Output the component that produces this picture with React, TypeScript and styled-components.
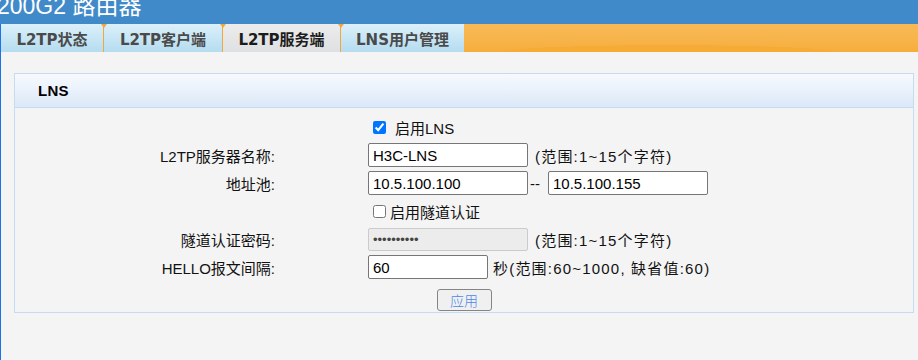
import React, { FC } from 'react';
import styled, { createGlobalStyle } from 'styled-components';

const GlobalStyle = createGlobalStyle`
  html, body {
    margin: 0;
    padding: 0;
    background: #f4f4f4;
    overflow: hidden;
  }
  body {
    font-family: 'Liberation Sans', 'Noto Sans CJK SC', Arial, sans-serif;
  }
`;

const Page = styled.div`
  width: 918px;
  height: 360px;
  display: flex;
  flex-direction: column;
  overflow: hidden;
`;

const TitleBar = styled.div`
  height: 24px;
  flex: none;
  background: #418ac9;
  overflow: hidden;
`;

const Title = styled.div`
  margin: -6px 0 0 -3px;
  font-size: 23px;
  line-height: 24px;
  color: #ffffff;
  white-space: nowrap;
`;

const Main = styled.div`
  flex: 1;
  display: flex;
  flex-direction: column;
  border-left: 1px solid #1a73e8;
  background: #f4f4f4;
`;

const TabBar = styled.div`
  height: 28px;
  display: flex;
  flex: none;
`;

const Tab = styled.div<{ $w: number; $active?: boolean; $sep?: boolean }>`
  position: relative;
  box-sizing: border-box;
  width: ${(p) => p.$w}px;
  height: 28px;
  display: flex;
  align-items: center;
  justify-content: center;
  font-family: 'DejaVu Sans', 'Noto Sans CJK SC', sans-serif;
  font-weight: bold;
  font-size: 15px;
  color: ${(p) => (p.$active ? '#1c1c1c' : '#4a4a4a')};
  background: ${(p) =>
    p.$active
      ? 'linear-gradient(#ececec, #dfe0e2)'
      : 'linear-gradient(#dbf0fa, #b5dcf0)'};
  border-right: ${(p) => (p.$sep ? '1px solid #f2a73c' : 'none')};

  &::after {
    content: '';
    display: ${(p) => (p.$sep ? 'block' : 'none')};
    position: absolute;
    top: 0;
    right: -4px;
    border-left: 3px solid transparent;
    border-right: 3px solid transparent;
    border-top: 4px solid #f2a73c;
    z-index: 1;
  }
`;

const TabFill = styled.div`
  flex: 1;
  height: 28px;
  background:
    radial-gradient(ellipse 60% 40% at 45% 100%, #f6ab36 60%, transparent 62%),
    linear-gradient(#f8b955, #f7b44b 55%, #f6ad3a);
`;

const Content = styled.div`
  padding: 21px 4px 0 13px;
`;

const Panel = styled.div`
  width: 900px;
  box-sizing: border-box;
  border: 1px solid #c6dbef;
`;

const PanelHeader = styled.div`
  height: 33px;
  display: flex;
  align-items: center;
  padding-left: 23px;
  border-bottom: 1px solid #c6dbef;
  background: linear-gradient(#f7fafe, #dbe8f8);
  font-weight: bold;
  font-size: 15px;
  letter-spacing: 0.3px;
  color: #000;
`;

const PanelBody = styled.div`
  padding: 5px 0 1px;
  display: flex;
  flex-direction: column;
`;

const Row = styled.div`
  display: grid;
  grid-template-columns: 262px 1fr;
  column-gap: 91px;
  height: 28px;
  align-items: center;
  font-size: 15px;
  color: #111;
`;

const Label = styled.div`
  text-align: right;
  padding-right: 2px;
  white-space: nowrap;
`;

const Cell = styled.div`
  display: flex;
  align-items: center;
  white-space: nowrap;
`;

const Check = styled.input<{ $gap: number }>`
  width: 13px;
  height: 13px;
  margin: 0 ${(p) => p.$gap}px 0 5px;
`;

const Field = styled.input<{ $w: number }>`
  box-sizing: border-box;
  width: ${(p) => p.$w}px;
  height: 24px;
  margin: 0;
  padding: 0 4px;
  border: 1px solid #767676;
  border-radius: 2px;
  background: #fff;
  font-family: 'Liberation Sans', 'Noto Sans CJK SC', sans-serif;
  font-size: 15px;
  color: #000;
  outline: none;

  &:disabled {
    height: 23px;
    background: #ececec;
    border-color: #cbcbcb;
    color: #444;
    font-size: 13px;
    letter-spacing: 0;
  }
`;

const Hint = styled.span<{ $gap: number }>`
  margin-left: ${(p) => p.$gap}px;
  font-size: 15px;
  letter-spacing: 1.2px;
`;

const Dash = styled.span`
  margin: 0 8px 0 2px;
  font-size: 15px;
`;

const ButtonRow = styled.div`
  display: flex;
  justify-content: center;
  padding-top: 8px;
`;

const ApplyButton = styled.button`
  width: 55px;
  height: 22px;
  padding: 0;
  border: 1px solid #858585;
  border-radius: 3px;
  background: #f0f0f0;
  font-family: 'Noto Sans CJK SC', sans-serif;
  font-size: 14px;
  font-weight: 300;
  color: #4f86ea;
`;

const tabs = [
  { name: 'L2TP状态', w: 103, sep: true },
  { name: 'L2TP客户端', w: 119, sep: true },
  { name: 'L2TP服务端', w: 118, sep: true, active: true },
  { name: 'LNS用户管理', w: 123 },
];

const App: FC = () => {
  return (
    <Page>
      <GlobalStyle />
      <TitleBar>
        <Title>200G2 路由器</Title>
      </TitleBar>
      <Main>
        <TabBar>
          {tabs.map((t) => (
            <Tab key={t.name} $w={t.w} $sep={t.sep} $active={t.active}>
              {t.name}
            </Tab>
          ))}
          <TabFill />
        </TabBar>
        <Content>
          <Panel>
            <PanelHeader>LNS</PanelHeader>
            <PanelBody>
              <Row>
                <Label />
                <Cell>
                  <Check type="checkbox" defaultChecked $gap={9} />
                  <span>启用LNS</span>
                </Cell>
              </Row>
              <Row>
                <Label>L2TP服务器名称:</Label>
                <Cell>
                  <Field $w={160} defaultValue="H3C-LNS" />
                  <Hint $gap={7}>(范围:1~15个字符)</Hint>
                </Cell>
              </Row>
              <Row>
                <Label>地址池:</Label>
                <Cell>
                  <Field $w={160} defaultValue="10.5.100.100" />
                  <Dash>--</Dash>
                  <Field $w={160} defaultValue="10.5.100.155" />
                </Cell>
              </Row>
              <Row>
                <Label />
                <Cell>
                  <Check type="checkbox" $gap={4} />
                  <span>启用隧道认证</span>
                </Cell>
              </Row>
              <Row>
                <Label>隧道认证密码:</Label>
                <Cell>
                  <Field $w={160} type="password" disabled defaultValue="1234567890" />
                  <Hint $gap={7}>(范围:1~15个字符)</Hint>
                </Cell>
              </Row>
              <Row>
                <Label>HELLO报文间隔:</Label>
                <Cell>
                  <Field $w={120} defaultValue="60" />
                  <Hint $gap={5}>秒(范围:60~1000, 缺省值:60)</Hint>
                </Cell>
              </Row>
              <ButtonRow>
                <ApplyButton>应用</ApplyButton>
              </ButtonRow>
            </PanelBody>
          </Panel>
        </Content>
      </Main>
    </Page>
  );
};

export default App;
